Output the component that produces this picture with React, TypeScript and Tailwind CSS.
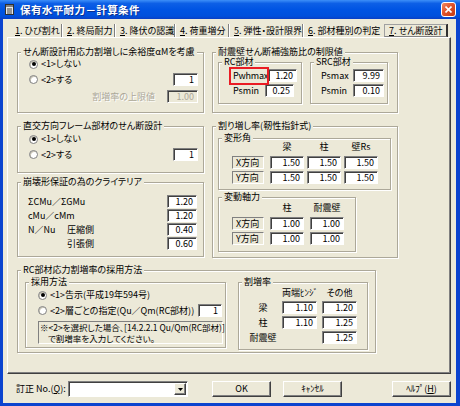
import type { ReactNode } from 'react'

const SUNKEN = 'border border-t-[#808080] border-l-[#808080] border-r-white border-b-white'
const RAISED =
  'border border-t-white border-l-white border-r-[#404040] border-b-[#404040] shadow-[inset_-1px_-1px_0_#808080]'

function Group({ title, className = '', children }: { title: string; className?: string; children?: ReactNode }) {
  return (
    <div className={`relative shrink-0 border border-[#aca899] shadow-[inset_1px_1px_0_#fff,1px_1px_0_#fff] ${className}`}>
      <span className="absolute -top-[6px] left-[3px] px-[2px] bg-[#ece9d8] leading-[10px] whitespace-nowrap">
        {title}
      </span>
      {children}
    </div>
  )
}

function Num({ v, w, disabled = false }: { v: string; w: string; disabled?: boolean }) {
  return (
    <div
      className={`${w} h-[13px] shrink-0 flex items-center justify-end pr-[3px] ${SUNKEN} shadow-[inset_1px_1px_0_#404040] ${
        disabled ? 'bg-[#ece9d8] text-[#aca899]' : 'bg-white'
      }`}
    >
      {v}
    </div>
  )
}

function Radio({ checked = false, children }: { checked?: boolean; children: ReactNode }) {
  return (
    <div className="flex items-center h-[12px]">
      <span className="w-[9px] h-[9px] shrink-0 rounded-full bg-white border border-[#808080] shadow-[inset_1px_1px_0_#c8c4b4] flex items-center justify-center">
        {checked && <span className="w-[4px] h-[4px] rounded-full bg-black" />}
      </span>
      <span className="ml-[3px] whitespace-nowrap">{children}</span>
    </div>
  )
}

function LabelBox({ children }: { children: ReactNode }) {
  return <div className={`w-[32px] h-[13px] shrink-0 flex items-center pl-[3px] ${SUNKEN}`}>{children}</div>
}

const TABS = [
  { n: '1', label: 'ひび割れ', w: 'w-[52px]' },
  { n: '2', label: '終局耐力', w: 'w-[53px]' },
  { n: '3', label: '降伏の認識', w: 'w-[60px]' },
  { n: '4', label: '荷重増分', w: 'w-[54px]' },
  { n: '5', label: '弾性・設計限界', w: 'w-[74px]' },
  { n: '6', label: '部材種別の判定', w: 'w-[79px]' },
]

export default function App() {
  return (
    <div className="w-[460px] h-[406px] overflow-hidden bg-[#0b44cf] flex flex-col font-['Noto_Sans_CJK_JP',sans-serif] text-[9px] leading-[12px] text-black [font-feature-settings:'palt']">
      {/* Title bar */}
      <div className="h-[19px] shrink-0 flex items-center pl-[5px] pr-[4px] bg-[linear-gradient(to_bottom,#3d8ff8_0%,#0d5fe6_18%,#0054e3_50%,#0050dc_85%,#0a3fc4_100%)]">
        <svg width="9" height="11" viewBox="0 0 9 11" className="shrink-0">
          <rect x="0.5" y="0.5" width="8" height="10" fill="#e8e8e8" stroke="#303030" />
          <rect x="1" y="1" width="7" height="2" fill="#808080" />
          <path d="M2 5h5M2 7h5M2 9h5" stroke="#404040" strokeWidth="1" />
        </svg>
        <span className="ml-[6px] text-white font-bold text-[10.5px] tracking-[0.4px] [font-feature-settings:normal] [text-shadow:1px_1px_0_#0a2f8f]">
          保有水平耐力－計算条件
        </span>
        <div className="ml-auto w-[15px] h-[15px] rounded-[3px] border border-white bg-[linear-gradient(135deg,#f08a62_0%,#e0532b_45%,#c33a12_100%)] flex items-center justify-center">
          <svg width="7" height="7" viewBox="0 0 7 7">
            <path d="M0.5 0.5L6.5 6.5M6.5 0.5L0.5 6.5" stroke="white" strokeWidth="1.6" />
          </svg>
        </div>
      </div>

      {/* Dialog body */}
      <div className="flex-1 ml-[3px] mr-[4px] mb-[3px] bg-[#ece9d8] flex flex-col">
        {/* Tabs */}
        <div className="mt-[5px] h-[13px] pl-[7px] flex items-stretch shrink-0">
          {TABS.map((t, i) => (
            <div
              key={t.n}
              className={`${t.w} pl-[5px] flex items-center whitespace-nowrap ${
                i < 5 ? 'border-r border-r-[#808080] shadow-[1px_0_0_#fff]' : ''
              }`}
            >
              <span className="underline">{t.n}</span>.&nbsp;{t.label}
            </div>
          ))}
          <div className="ml-[2px] w-[63px] pl-[4px] flex items-center whitespace-nowrap border border-t-[#a0a0a0] border-l-[#a0a0a0] border-r-[#303030] border-b-[#808080] shadow-[1px_0_0_#303030]">
            <span className="underline">7</span>.&nbsp;せん断設計
          </div>
        </div>

        {/* Tab page */}
        <div className="ml-[4px] w-[444px] h-[337px] shrink-0 border border-t-white border-l-white border-r-[#404040] border-b-[#404040] shadow-[inset_-1px_-1px_0_#808080] pl-[9px] pt-[14px]">
          <div className="flex gap-[8px]">
            {/* Left column */}
            <div className="w-[187px] flex flex-col">
              <Group title="せん断設計用応力割増しに余裕度αMを考慮" className="h-[61px]">
                <div className="pl-[11px] pr-[5px] pt-[5px] flex flex-col">
                  <Radio checked>&lt;1&gt;しない</Radio>
                  <div className="mt-[3px] h-[13px] flex items-center justify-between">
                    <Radio>&lt;2&gt;する</Radio>
                    <Num v="1" w="w-[25px]" />
                  </div>
                  <div className="mt-[4px] h-[13px] flex items-center justify-end">
                    <span className="mr-[12px] text-[#aca899] [text-shadow:1px_1px_0_#fff]">割増率の上限値</span>
                    <Num v="1.00" w="w-[31px]" disabled />
                  </div>
                </div>
              </Group>

              <Group title="直交方向フレーム部材のせん断設計" className="h-[47px] mt-[13px]">
                <div className="pl-[11px] pr-[5px] pt-[6px] flex flex-col">
                  <Radio checked>&lt;1&gt;しない</Radio>
                  <div className="mt-[3px] h-[13px] flex items-center justify-between">
                    <Radio>&lt;2&gt;する</Radio>
                    <Num v="1" w="w-[25px]" />
                  </div>
                </div>
              </Group>

              <Group title="崩壊形保証の為のクライテリア" className="h-[75px] mt-[9px]">
                <div className="pl-[10px] pr-[6px] pt-[12px] flex flex-col gap-[1px]">
                  <div className="h-[13px] flex items-center justify-between">
                    <span>ΣCMu／ΣGMu</span>
                    <Num v="1.20" w="w-[30px]" />
                  </div>
                  <div className="h-[13px] flex items-center justify-between">
                    <span>cMu／cMm</span>
                    <Num v="1.20" w="w-[30px]" />
                  </div>
                  <div className="h-[13px] flex items-center">
                    <span className="w-[39px]">N／Nu</span>
                    <span>圧縮側</span>
                    <div className="ml-auto">
                      <Num v="0.40" w="w-[30px]" />
                    </div>
                  </div>
                  <div className="h-[13px] flex items-center">
                    <span className="w-[39px]" />
                    <span>引張側</span>
                    <div className="ml-auto">
                      <Num v="0.60" w="w-[30px]" />
                    </div>
                  </div>
                </div>
              </Group>
            </div>

            {/* Right column */}
            <div className="w-[186px] flex flex-col">
              <Group title="耐震壁せん断補強筋比の制限値" className="h-[61px]">
                <div className="pl-[5px] pt-[9px] flex">
                  <Group title="RC部材" className="w-[84px] h-[42px]">
                    <div className="pl-[14px] pr-[7px] pt-[6px] flex flex-col gap-[2px]">
                      <div className="relative h-[13px] flex items-center justify-between">
                        <span className="tracking-[-0.2px]">Pwhmax</span>
                        <Num v="1.20" w="w-[29px]" />
                        <span className="absolute -left-[4px] -top-[2px] w-[40px] h-[18px] border-2 border-[#ea1c24]" />
                      </div>
                      <div className="h-[13px] flex items-center justify-between">
                        <span>Psmin</span>
                        <Num v="0.25" w="w-[29px]" />
                      </div>
                    </div>
                  </Group>
                  <Group title="SRC部材" className="ml-[8px] w-[78px] h-[42px]">
                    <div className="pl-[10px] pr-[3px] pt-[6px] flex flex-col gap-[2px]">
                      <div className="h-[13px] flex items-center justify-between">
                        <span>Psmax</span>
                        <Num v="9.99" w="w-[31px]" />
                      </div>
                      <div className="h-[13px] flex items-center justify-between">
                        <span>Psmin</span>
                        <Num v="0.10" w="w-[31px]" />
                      </div>
                    </div>
                  </Group>
                </div>
              </Group>

              <Group title="割り増し率(靭性指針式)" className="h-[132px] mt-[13px]">
                <div className="pl-[5px] pt-[11px] flex flex-col">
                  <Group title="変形角" className="w-[173px] h-[52px]">
                    <div className="pl-[13px] pt-[2px] flex flex-col">
                      <div className="h-[12px] flex">
                        <span className="w-[38px]" />
                        <span className="w-[34px] text-center">梁</span>
                        <span className="ml-[3px] w-[34px] text-center">柱</span>
                        <span className="ml-[3px] w-[34px] text-center">壁Rs</span>
                      </div>
                      {['X方向', 'Y方向'].map((d, i) => (
                        <div key={d} className={`${i === 0 ? 'mt-[3px]' : 'mt-[2px]'} h-[13px] flex items-center`}>
                          <LabelBox>{d}</LabelBox>
                          <div className="ml-[6px]">
                            <Num v="1.50" w="w-[34px]" />
                          </div>
                          <div className="ml-[3px]">
                            <Num v="1.50" w="w-[34px]" />
                          </div>
                          <div className="ml-[3px]">
                            <Num v="1.50" w="w-[34px]" />
                          </div>
                        </div>
                      ))}
                    </div>
                  </Group>

                  <Group title="変動軸力" className="mt-[7px] w-[138px] h-[55px]">
                    <div className="pl-[13px] pt-[4px] flex flex-col">
                      <div className="h-[12px] flex">
                        <span className="w-[38px]" />
                        <span className="w-[34px] text-center">柱</span>
                        <span className="ml-[6px] w-[34px] text-center">耐震壁</span>
                      </div>
                      {['X方向', 'Y方向'].map((d, i) => (
                        <div key={d} className={`${i === 0 ? 'mt-[3px]' : 'mt-[2px]'} h-[13px] flex items-center`}>
                          <LabelBox>{d}</LabelBox>
                          <div className="ml-[6px]">
                            <Num v="1.00" w="w-[34px]" />
                          </div>
                          <div className="ml-[6px]">
                            <Num v="1.00" w="w-[34px]" />
                          </div>
                        </div>
                      ))}
                    </div>
                  </Group>
                </div>
              </Group>
            </div>
          </div>

          {/* RC member factor */}
          <Group title="RC部材応力割増率の採用方法" className="w-[359px] h-[83px] mt-[12px]">
            <div className="pl-[7px] pt-[11px] flex">
              <Group title="採用方法" className="w-[201px] h-[66px]">
                <div className="pl-[12px] pr-[3px] pt-[6px] flex flex-col">
                  <Radio checked>&lt;1&gt;告示(平成19年594号)</Radio>
                  <div className="mt-[3px] h-[13px] flex items-center justify-between">
                    <Radio>&lt;2&gt;層ごとの指定(Qu／Qm(RC部材))</Radio>
                    <Num v="1" w="w-[24px]" />
                  </div>
                  <div className={`mt-[4px] w-[185px] h-[23px] ${SUNKEN} pl-[1px] text-[8.5px] leading-[10.5px] flex flex-col justify-center`}>
                    <span className="whitespace-nowrap">※&lt;2&gt;を選択した場合、[14.2.2.1 Qu/Qm(RC部材)]</span>
                    <span className="pl-[8px] whitespace-nowrap">で割増率を入力してください。</span>
                  </div>
                </div>
              </Group>

              <Group title="割増率" className="ml-[12px] w-[130px] h-[68px]">
                <div className="pl-[9px] pt-[4px] flex flex-col">
                  <div className="h-[12px] flex">
                    <span className="w-[34px]" />
                    <span className="w-[35px] text-center whitespace-nowrap">両端ﾋﾝｼﾞ</span>
                    <span className="ml-[5px] w-[35px] text-center">その他</span>
                  </div>
                  <div className="mt-[2px] h-[13px] flex items-center">
                    <span className="w-[30px] text-center">梁</span>
                    <div className="ml-[4px]">
                      <Num v="1.10" w="w-[35px]" />
                    </div>
                    <div className="ml-[5px]">
                      <Num v="1.20" w="w-[35px]" />
                    </div>
                  </div>
                  <div className="mt-[2px] h-[13px] flex items-center">
                    <span className="w-[30px] text-center">柱</span>
                    <div className="ml-[4px]">
                      <Num v="1.10" w="w-[35px]" />
                    </div>
                    <div className="ml-[5px]">
                      <Num v="1.25" w="w-[35px]" />
                    </div>
                  </div>
                  <div className="mt-[2px] h-[13px] flex items-center">
                    <span className="w-[30px] text-center">耐震壁</span>
                    <div className="ml-[44px]">
                      <Num v="1.25" w="w-[35px]" />
                    </div>
                  </div>
                </div>
              </Group>
            </div>
          </Group>
        </div>

        {/* Bottom bar */}
        <div className="mt-[7px] h-[16px] pl-[13px] flex items-center shrink-0">
          <span className="w-[52px] whitespace-nowrap">
            訂正 No.(<span className="underline">Q</span>):
          </span>
          <div className={`w-[120px] h-[16px] bg-white ${SUNKEN} shadow-[inset_1px_1px_0_#404040] flex items-center justify-end pr-[1px]`}>
            <div className={`w-[12px] h-[12px] bg-[#ece9d8] ${RAISED} flex items-center justify-center`}>
              <svg width="5" height="3" viewBox="0 0 5 3">
                <path d="M0 0h5L2.5 3z" fill="black" />
              </svg>
            </div>
          </div>
          <div className={`ml-[24px] w-[59px] h-[16px] ${RAISED} flex items-center justify-center`}>OK</div>
          <div className={`ml-[12px] w-[59px] h-[16px] ${RAISED} flex items-center justify-center`}>ｷｬﾝｾﾙ</div>
          <div className={`ml-[50px] w-[59px] h-[16px] ${RAISED} flex items-center justify-center`}>
            ﾍﾙﾌﾟ(<span className="underline">H</span>)
          </div>
        </div>
      </div>
    </div>
  )
}
